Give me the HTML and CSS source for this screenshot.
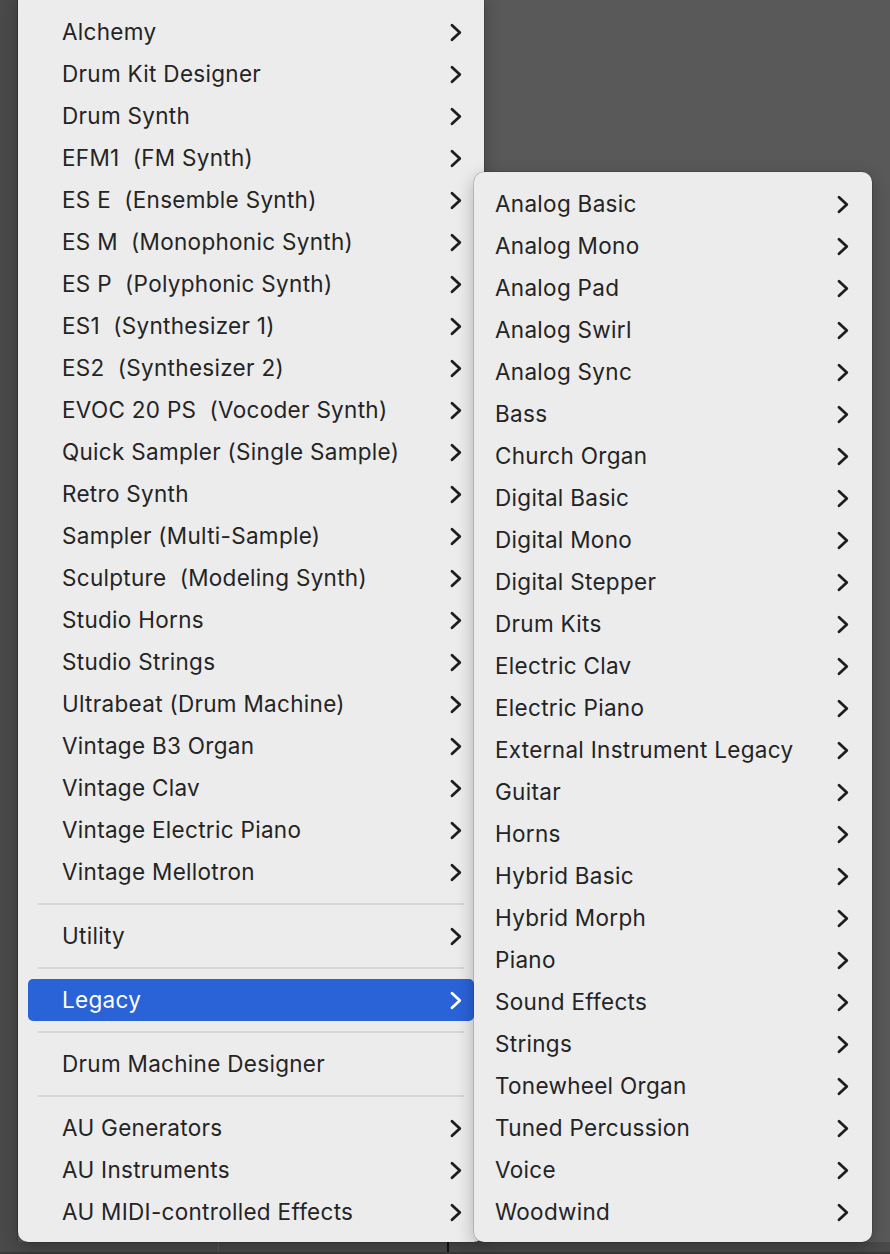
FILE: index.html
```html
<!DOCTYPE html>
<html>
<head>
    <title>Instrument Menu</title>
    <meta charset="UTF-8">
    <link rel="stylesheet" href="styles.css">
</head>
<body>
    <svg class="defs" aria-hidden="true">
        <symbol id="chev" viewBox="0 0 12 19">
            <path d="M2 2.2 L9.8 9.5 L2 16.8" fill="none" stroke="currentColor" stroke-width="2.8" stroke-linecap="round" stroke-linejoin="round"/>
        </symbol>
    </svg>

    <div class="workspace">
        <div class="side-strip"></div>
        <div class="canvas"></div>
        <div class="bottom-strip">
            <div class="track-a"></div>
            <div class="track-b"></div>
            <div class="track-c"></div>
        </div>
    </div>

    <!-- Main instrument menu -->
    <div class="menu main-menu">
        <div class="menu-item"><span>Alchemy</span><svg class="chev"><use href="#chev"/></svg></div>
        <div class="menu-item"><span>Drum Kit Designer</span><svg class="chev"><use href="#chev"/></svg></div>
        <div class="menu-item"><span>Drum Synth</span><svg class="chev"><use href="#chev"/></svg></div>
        <div class="menu-item"><span>EFM1  (FM Synth)</span><svg class="chev"><use href="#chev"/></svg></div>
        <div class="menu-item"><span>ES E  (Ensemble Synth)</span><svg class="chev"><use href="#chev"/></svg></div>
        <div class="menu-item"><span>ES M  (Monophonic Synth)</span><svg class="chev"><use href="#chev"/></svg></div>
        <div class="menu-item"><span>ES P  (Polyphonic Synth)</span><svg class="chev"><use href="#chev"/></svg></div>
        <div class="menu-item"><span>ES1  (Synthesizer 1)</span><svg class="chev"><use href="#chev"/></svg></div>
        <div class="menu-item"><span>ES2  (Synthesizer 2)</span><svg class="chev"><use href="#chev"/></svg></div>
        <div class="menu-item"><span>EVOC 20 PS  (Vocoder Synth)</span><svg class="chev"><use href="#chev"/></svg></div>
        <div class="menu-item"><span>Quick Sampler (Single Sample)</span><svg class="chev"><use href="#chev"/></svg></div>
        <div class="menu-item"><span>Retro Synth</span><svg class="chev"><use href="#chev"/></svg></div>
        <div class="menu-item"><span>Sampler (Multi-Sample)</span><svg class="chev"><use href="#chev"/></svg></div>
        <div class="menu-item"><span>Sculpture  (Modeling Synth)</span><svg class="chev"><use href="#chev"/></svg></div>
        <div class="menu-item"><span>Studio Horns</span><svg class="chev"><use href="#chev"/></svg></div>
        <div class="menu-item"><span>Studio Strings</span><svg class="chev"><use href="#chev"/></svg></div>
        <div class="menu-item"><span>Ultrabeat (Drum Machine)</span><svg class="chev"><use href="#chev"/></svg></div>
        <div class="menu-item"><span>Vintage B3 Organ</span><svg class="chev"><use href="#chev"/></svg></div>
        <div class="menu-item"><span>Vintage Clav</span><svg class="chev"><use href="#chev"/></svg></div>
        <div class="menu-item"><span>Vintage Electric Piano</span><svg class="chev"><use href="#chev"/></svg></div>
        <div class="menu-item"><span>Vintage Mellotron</span><svg class="chev"><use href="#chev"/></svg></div>
        <div class="separator"></div>
        <div class="menu-item"><span>Utility</span><svg class="chev"><use href="#chev"/></svg></div>
        <div class="separator"></div>
        <div class="menu-item active"><span>Legacy</span><svg class="chev"><use href="#chev"/></svg></div>
        <div class="separator"></div>
        <div class="menu-item"><span>Drum Machine Designer</span></div>
        <div class="separator"></div>
        <div class="menu-item"><span>AU Generators</span><svg class="chev"><use href="#chev"/></svg></div>
        <div class="menu-item"><span>AU Instruments</span><svg class="chev"><use href="#chev"/></svg></div>
        <div class="menu-item"><span>AU MIDI-controlled Effects</span><svg class="chev"><use href="#chev"/></svg></div>
    </div>

    <!-- Legacy submenu -->
    <div class="menu sub-menu">
        <div class="menu-item"><span>Analog Basic</span><svg class="chev"><use href="#chev"/></svg></div>
        <div class="menu-item"><span>Analog Mono</span><svg class="chev"><use href="#chev"/></svg></div>
        <div class="menu-item"><span>Analog Pad</span><svg class="chev"><use href="#chev"/></svg></div>
        <div class="menu-item"><span>Analog Swirl</span><svg class="chev"><use href="#chev"/></svg></div>
        <div class="menu-item"><span>Analog Sync</span><svg class="chev"><use href="#chev"/></svg></div>
        <div class="menu-item"><span>Bass</span><svg class="chev"><use href="#chev"/></svg></div>
        <div class="menu-item"><span>Church Organ</span><svg class="chev"><use href="#chev"/></svg></div>
        <div class="menu-item"><span>Digital Basic</span><svg class="chev"><use href="#chev"/></svg></div>
        <div class="menu-item"><span>Digital Mono</span><svg class="chev"><use href="#chev"/></svg></div>
        <div class="menu-item"><span>Digital Stepper</span><svg class="chev"><use href="#chev"/></svg></div>
        <div class="menu-item"><span>Drum Kits</span><svg class="chev"><use href="#chev"/></svg></div>
        <div class="menu-item"><span>Electric Clav</span><svg class="chev"><use href="#chev"/></svg></div>
        <div class="menu-item"><span>Electric Piano</span><svg class="chev"><use href="#chev"/></svg></div>
        <div class="menu-item"><span>External Instrument Legacy</span><svg class="chev"><use href="#chev"/></svg></div>
        <div class="menu-item"><span>Guitar</span><svg class="chev"><use href="#chev"/></svg></div>
        <div class="menu-item"><span>Horns</span><svg class="chev"><use href="#chev"/></svg></div>
        <div class="menu-item"><span>Hybrid Basic</span><svg class="chev"><use href="#chev"/></svg></div>
        <div class="menu-item"><span>Hybrid Morph</span><svg class="chev"><use href="#chev"/></svg></div>
        <div class="menu-item"><span>Piano</span><svg class="chev"><use href="#chev"/></svg></div>
        <div class="menu-item"><span>Sound Effects</span><svg class="chev"><use href="#chev"/></svg></div>
        <div class="menu-item"><span>Strings</span><svg class="chev"><use href="#chev"/></svg></div>
        <div class="menu-item"><span>Tonewheel Organ</span><svg class="chev"><use href="#chev"/></svg></div>
        <div class="menu-item"><span>Tuned Percussion</span><svg class="chev"><use href="#chev"/></svg></div>
        <div class="menu-item"><span>Voice</span><svg class="chev"><use href="#chev"/></svg></div>
        <div class="menu-item"><span>Woodwind</span><svg class="chev"><use href="#chev"/></svg></div>
    </div>
</body>
</html>
```

FILE: styles.css
```css
html, body {
    margin: 0;
    padding: 0;
}

body {
    width: 890px;
    height: 1254px;
    overflow: hidden;
    position: relative;
    font-family: Inter, 'Noto Sans', sans-serif;
    background: #595959;
    color: #242424;
    user-select: none;
}

.defs {
    width: 0;
    height: 0;
    position: absolute;
}

.workspace {
    display: grid;
    grid-template-columns: 18px 1fr;
    grid-template-rows: 1242px 12px;
    height: 100%;
}

.side-strip {
    background: #4a4a4a;
    border-right: 1px solid #404040;
}

.canvas {
    background: #595959;
}

.bottom-strip {
    grid-column: 1 / 3;
    display: flex;
    background: #4a4a4a;
    border-bottom: 2px solid #3a3a3a;
}

.track-a {
    width: 218px;
    border-right: 1px solid #5a5a5a;
}

.track-b {
    width: 228px;
    border-right: 2px solid #111111;
}

.track-c {
    flex: 1;
}

/* menus */

.menu {
    position: absolute;
    background: #ececec;
    border-radius: 10px;
    box-sizing: border-box;
    box-shadow: 0 0 0 0.5px rgba(0,0,0,0.25), 0 6px 18px rgba(0,0,0,0.28);
}

.main-menu {
    left: 18px;
    top: -10px;
    width: 466px;
    height: 1252px;
    padding-top: 21px;
}

.sub-menu {
    left: 474px;
    top: 172px;
    width: 398px;
    height: 1070px;
    padding-top: 11px;
}

.menu-item {
    height: 42px;
    margin: 0 10px;
    display: flex;
    justify-content: space-between;
    align-items: center;
    border-radius: 5px;
    font-size: 22.5px;
    letter-spacing: 0.3px;
    white-space: pre;
}

.menu-item span {
    margin-bottom: 2px;
}

.main-menu .menu-item {
    padding: 0 12px 0 34px;
}

.sub-menu .menu-item {
    padding: 0 13px 0 11px;
}

.menu-item.active {
    background: #2a62d8;
    color: #ffffff;
}

.chev {
    width: 12px;
    height: 19px;
    color: #1e1e1e;
    flex: none;
}

.menu-item.active .chev {
    color: #ffffff;
}

.separator {
    height: 22px;
    margin: 0 20px;
    display: flex;
    align-items: center;
}

.separator::before {
    content: '';
    flex: 1;
    height: 2px;
    background: #d6d6d6;
}
```
